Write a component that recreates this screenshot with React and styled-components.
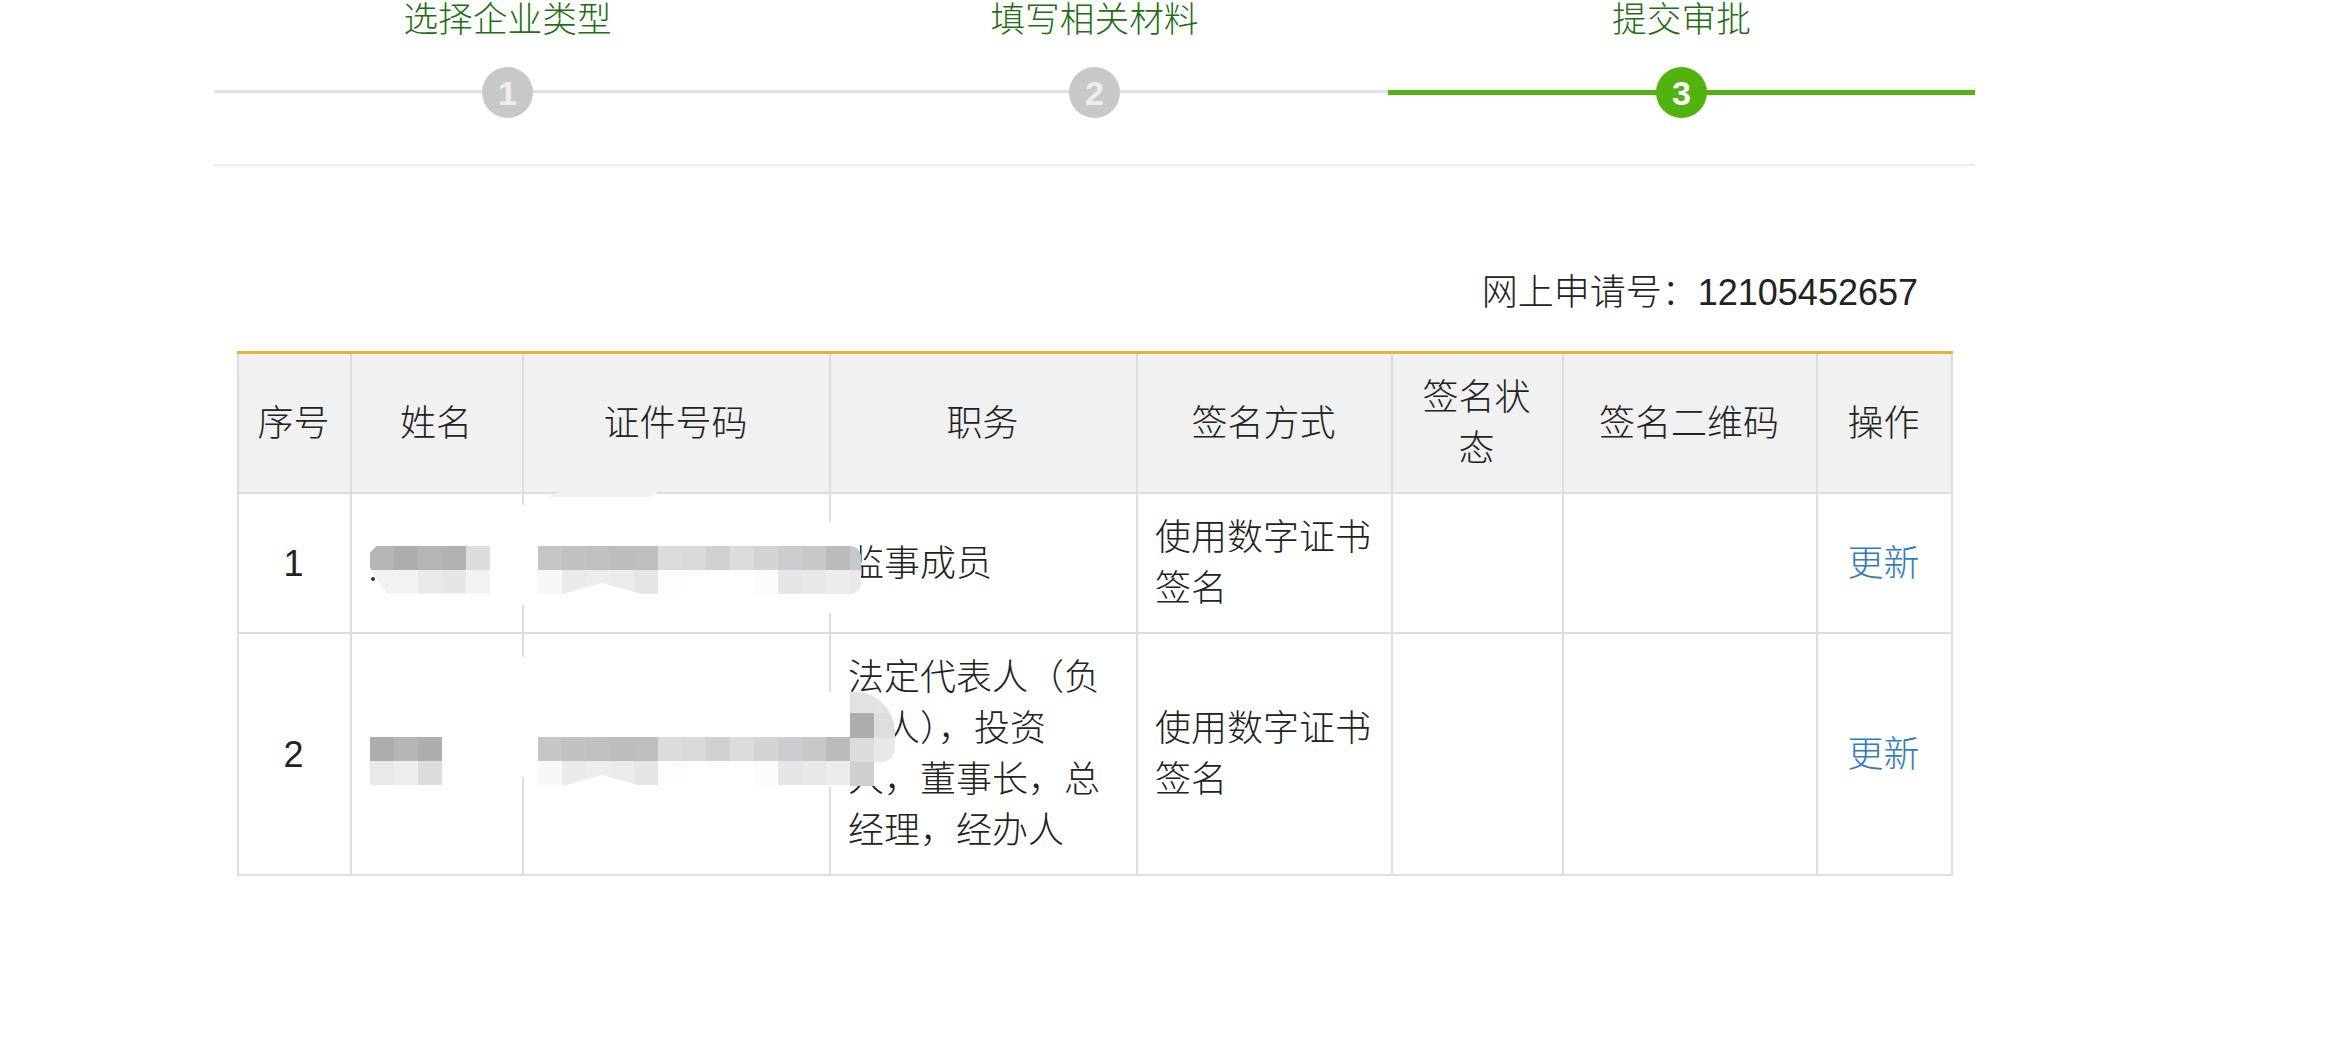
import React from 'react'
import styled, { createGlobalStyle } from 'styled-components'

const steps = [
  { title: '选择企业类型', num: 1 },
  { title: '填写相关材料', num: 2 },
  { title: '提交审批', num: 3, active: true },
]

const heads = ['序号', '姓名', '证件号码', '职务', '签名方式', '签名状态', '签名二维码', '操作']
const colWidths = [113, 172, 307, 307, 255, 171, 254, 135]

const idTop = ['#c6c6c6', '#c4c2c0', '#bfc0c2', '#bdbdbd', '#bebebe', '#dadcda', '#d8dad8', '#d0d0d0', '#dcdcda', '#d6d4d2', '#cccdd0', '#c8c8c8', '#bbbbbb']
const idBottom = ['#f8f8f8', '#eaeaea', '#ececec', '#ebebeb', '#e6e6e6', '#fdfdfd', '#ffffff', '#ffffff', '#ffffff', '#fcfcfc', '#e6e6e6', '#e8e8e8', '#ececec']

const rows = [
  {
    no: 1,
    job: '监事成员',
    name: {
      cols: 5,
      clip: 'polygon(7px 0, 100% 0, 100% 100%, 17px 100%, 4px 30px, 0 22px, 0 7px)',
      cells: ['#b5b5b5', '#aeaeae', '#b4b6b4', '#b2b2b2', '#dcdedc', '#f2f2f2', '#f2f2f2', '#e9e9e9', '#e6e6e6', '#f2f2f2'],
    },
  },
  {
    no: 2,
    job: '法定代表人（负责人），投资人，董事长，总经理，经办人',
    name: { cols: 3, cells: ['#aeadac', '#b6b6b6', '#adaeb0', '#e9e9e9', '#eeeeee', '#dcdedc'] },
  },
]

// white smudges from the screenshot's redaction, they cut the table lines
const smudges = [
  { x: 519, y: 505, w: 8, h: 100 },
  { x: 827, y: 522, w: 33, h: 91, r: '0 28px 28px 0' },
  { x: 519, y: 657, w: 8, h: 120 },
  { x: 827, y: 692, w: 23, h: 95 },
]

const blotCells = ['#e2e2e2', '#e2e4e2', '#afadac', '#dcdfdc', '#dcdcde', '#e8e8e8']

const GlobalStyle = createGlobalStyle`
  html, body {
    margin: 0;
    background: #fff;
  }
  body {
    font-family: "Liberation Sans", "Noto Sans CJK SC", sans-serif;
    font-weight: 300;
    color: #222;
  }
`

const Page = styled.div`
  position: relative;
  height: 1055px;
  padding-left: 214px;
  box-sizing: border-box;
  overflow: hidden;
`

const Content = styled.div`
  width: 1761px;
`

const Stepper = styled.div`
  display: flex;
  height: 164px;
  border-bottom: 2px solid #eee;
`

const Step = styled.div`
  flex: 1;
  display: flex;
  flex-direction: column;
  align-items: center;
`

const StepTitle = styled.div`
  padding-top: 1px;
  font-size: 34.7px;
  line-height: 38px;
  color: #1c7012;
`

const StepTrack = styled.div`
  position: relative;
  align-self: stretch;
  display: flex;
  justify-content: center;
  margin-top: 28px;
  &::before {
    content: '';
    position: absolute;
    left: 0;
    right: 0;
    top: 23px;
    height: ${p => (p.$active ? '5px' : '3px')};
    background: ${p => (p.$active ? '#52b30e' : '#e2e2e2')};
  }
`

const StepDot = styled.div`
  position: relative;
  width: 51px;
  height: 51px;
  border-radius: 50%;
  background: ${p => (p.$active ? '#52b30e' : '#c8c8c8')};
  color: ${p => (p.$active ? '#fff' : '#eee')};
  font-size: 34px;
  font-weight: 700;
  line-height: 52px;
  text-align: center;
`

const ApplyNo = styled.div`
  margin-top: 107px;
  padding-right: 57px;
  text-align: right;
  font-size: 36px;
  line-height: 40px;
`

const Table = styled.table`
  margin: 38px 0 0 23px;
  width: 1714px;
  table-layout: fixed;
  border-collapse: collapse;
  font-size: 36px;
  line-height: 51px;
`

const HeadCell = styled.th`
  padding: 18px 19px 18px 17px;
  border: 2px solid #ddd;
  border-top: 3px solid #e3b33a;
  background: #f1f1f1;
  font-weight: 300;
  text-align: center;
  vertical-align: middle;
`

const Cell = styled.td`
  padding: 18px 19px 18px 17px;
  border: 2px solid #ddd;
  vertical-align: middle;
  text-align: ${p => (p.$center ? 'center' : 'left')};
`

const UpdateLink = styled.a`
  color: #2f7cc0;
  text-decoration: none;
`

// pixelated blocks that hide the name and id in a cell
const Mosaic = styled.div`
  position: relative;
  z-index: 1;
  display: grid;
  width: max-content;
  grid-template-columns: repeat(${p => p.$cols}, 24px);
  grid-auto-rows: 24px;
  margin: 13px 0 0 ${p => p.$shift || 0}px;
  clip-path: ${p => p.$clip || 'none'};
`

const MosaicCell = styled.span`
  background: ${p => p.$c};
`

const Smudge = styled.div`
  position: absolute;
  left: ${p => p.$x}px;
  top: ${p => p.$y}px;
  width: ${p => p.$w}px;
  height: ${p => p.$h}px;
  border-radius: ${p => p.$r || '0'};
  background: #fff;
`

// the white hump that eats the bottom row of the id mosaic
const Hump = styled.div`
  position: absolute;
  z-index: 2;
  left: 563px;
  top: ${p => p.$y}px;
  width: 78px;
  height: 11px;
  background: #fff;
  clip-path: polygon(0 100%, 50% 0, 100% 100%);
`

const HeaderPatch = styled.div`
  position: absolute;
  left: 547px;
  top: 491px;
  width: 113px;
  height: 6px;
  background: #f1f1f1;
  clip-path: polygon(0 100%, 12% 0, 100% 0, 90% 100%);
`

const Speck = styled.div`
  position: absolute;
  z-index: 2;
  left: 371px;
  top: 577px;
  width: 4px;
  height: 4px;
  border-radius: 50%;
  background: #333;
`

const EndStrip = styled.div`
  position: absolute;
  z-index: 2;
  left: 850px;
  top: 546px;
  width: 11px;
  height: 48px;
  border-radius: 0 24px 24px 0;
  background: linear-gradient(#c5cacc 50%, #e8eaea 50%);
`

// the blot sitting on top of the job text in row 2
const JobBlot = styled.div`
  position: absolute;
  z-index: 2;
  left: 850px;
  top: 692px;
  display: grid;
  grid-template-columns: 24px 21px;
  grid-template-rows: 21px 25px 24px;
  width: 45px;
  border-radius: 0 40px 14px 0;
  overflow: hidden;
`

const JobBlotTail = styled.div`
  position: absolute;
  z-index: 2;
  left: 850px;
  top: 762px;
  width: 24px;
  height: 24px;
  background: #cfcfcf;
`

const MosaicBlocks = ({ cols, cells, clip, shift }) => (
  <Mosaic $cols={cols} $clip={clip} $shift={shift}>
    {cells.map((c, i) => <MosaicCell key={i} $c={c} />)}
  </Mosaic>
)

const App = () => (
  <Page>
    <GlobalStyle />
    <Content>
      <Stepper>
        {steps.map(s => (
          <Step key={s.num}>
            <StepTitle>{s.title}</StepTitle>
            <StepTrack $active={s.active}>
              <StepDot $active={s.active}>{s.num}</StepDot>
            </StepTrack>
          </Step>
        ))}
      </Stepper>
      <ApplyNo>网上申请号：12105452657</ApplyNo>
      <Table>
        <colgroup>
          {colWidths.map((w, i) => <col key={i} width={w} />)}
        </colgroup>
        <thead>
          <tr>
            {heads.map(h => <HeadCell key={h}>{h}</HeadCell>)}
          </tr>
        </thead>
        <tbody>
          {rows.map(r => (
            <tr key={r.no}>
              <Cell $center>{r.no}</Cell>
              <Cell><MosaicBlocks {...r.name} shift={1} /></Cell>
              <Cell><MosaicBlocks cols={13} cells={[...idTop, ...idBottom]} shift={-3} /></Cell>
              <Cell>{r.job}</Cell>
              <Cell>使用数字证书签名</Cell>
              <Cell />
              <Cell />
              <Cell $center><UpdateLink href="#">更新</UpdateLink></Cell>
            </tr>
          ))}
        </tbody>
      </Table>
    </Content>

    <HeaderPatch />
    {smudges.map((s, i) => <Smudge key={i} $x={s.x} $y={s.y} $w={s.w} $h={s.h} $r={s.r} />)}
    <Hump $y={583} />
    <Hump $y={775} />
    <Speck />
    <EndStrip />
    <JobBlot>
      {blotCells.map((c, i) => <MosaicCell key={i} $c={c} />)}
    </JobBlot>
    <JobBlotTail />
  </Page>
)

export default App
